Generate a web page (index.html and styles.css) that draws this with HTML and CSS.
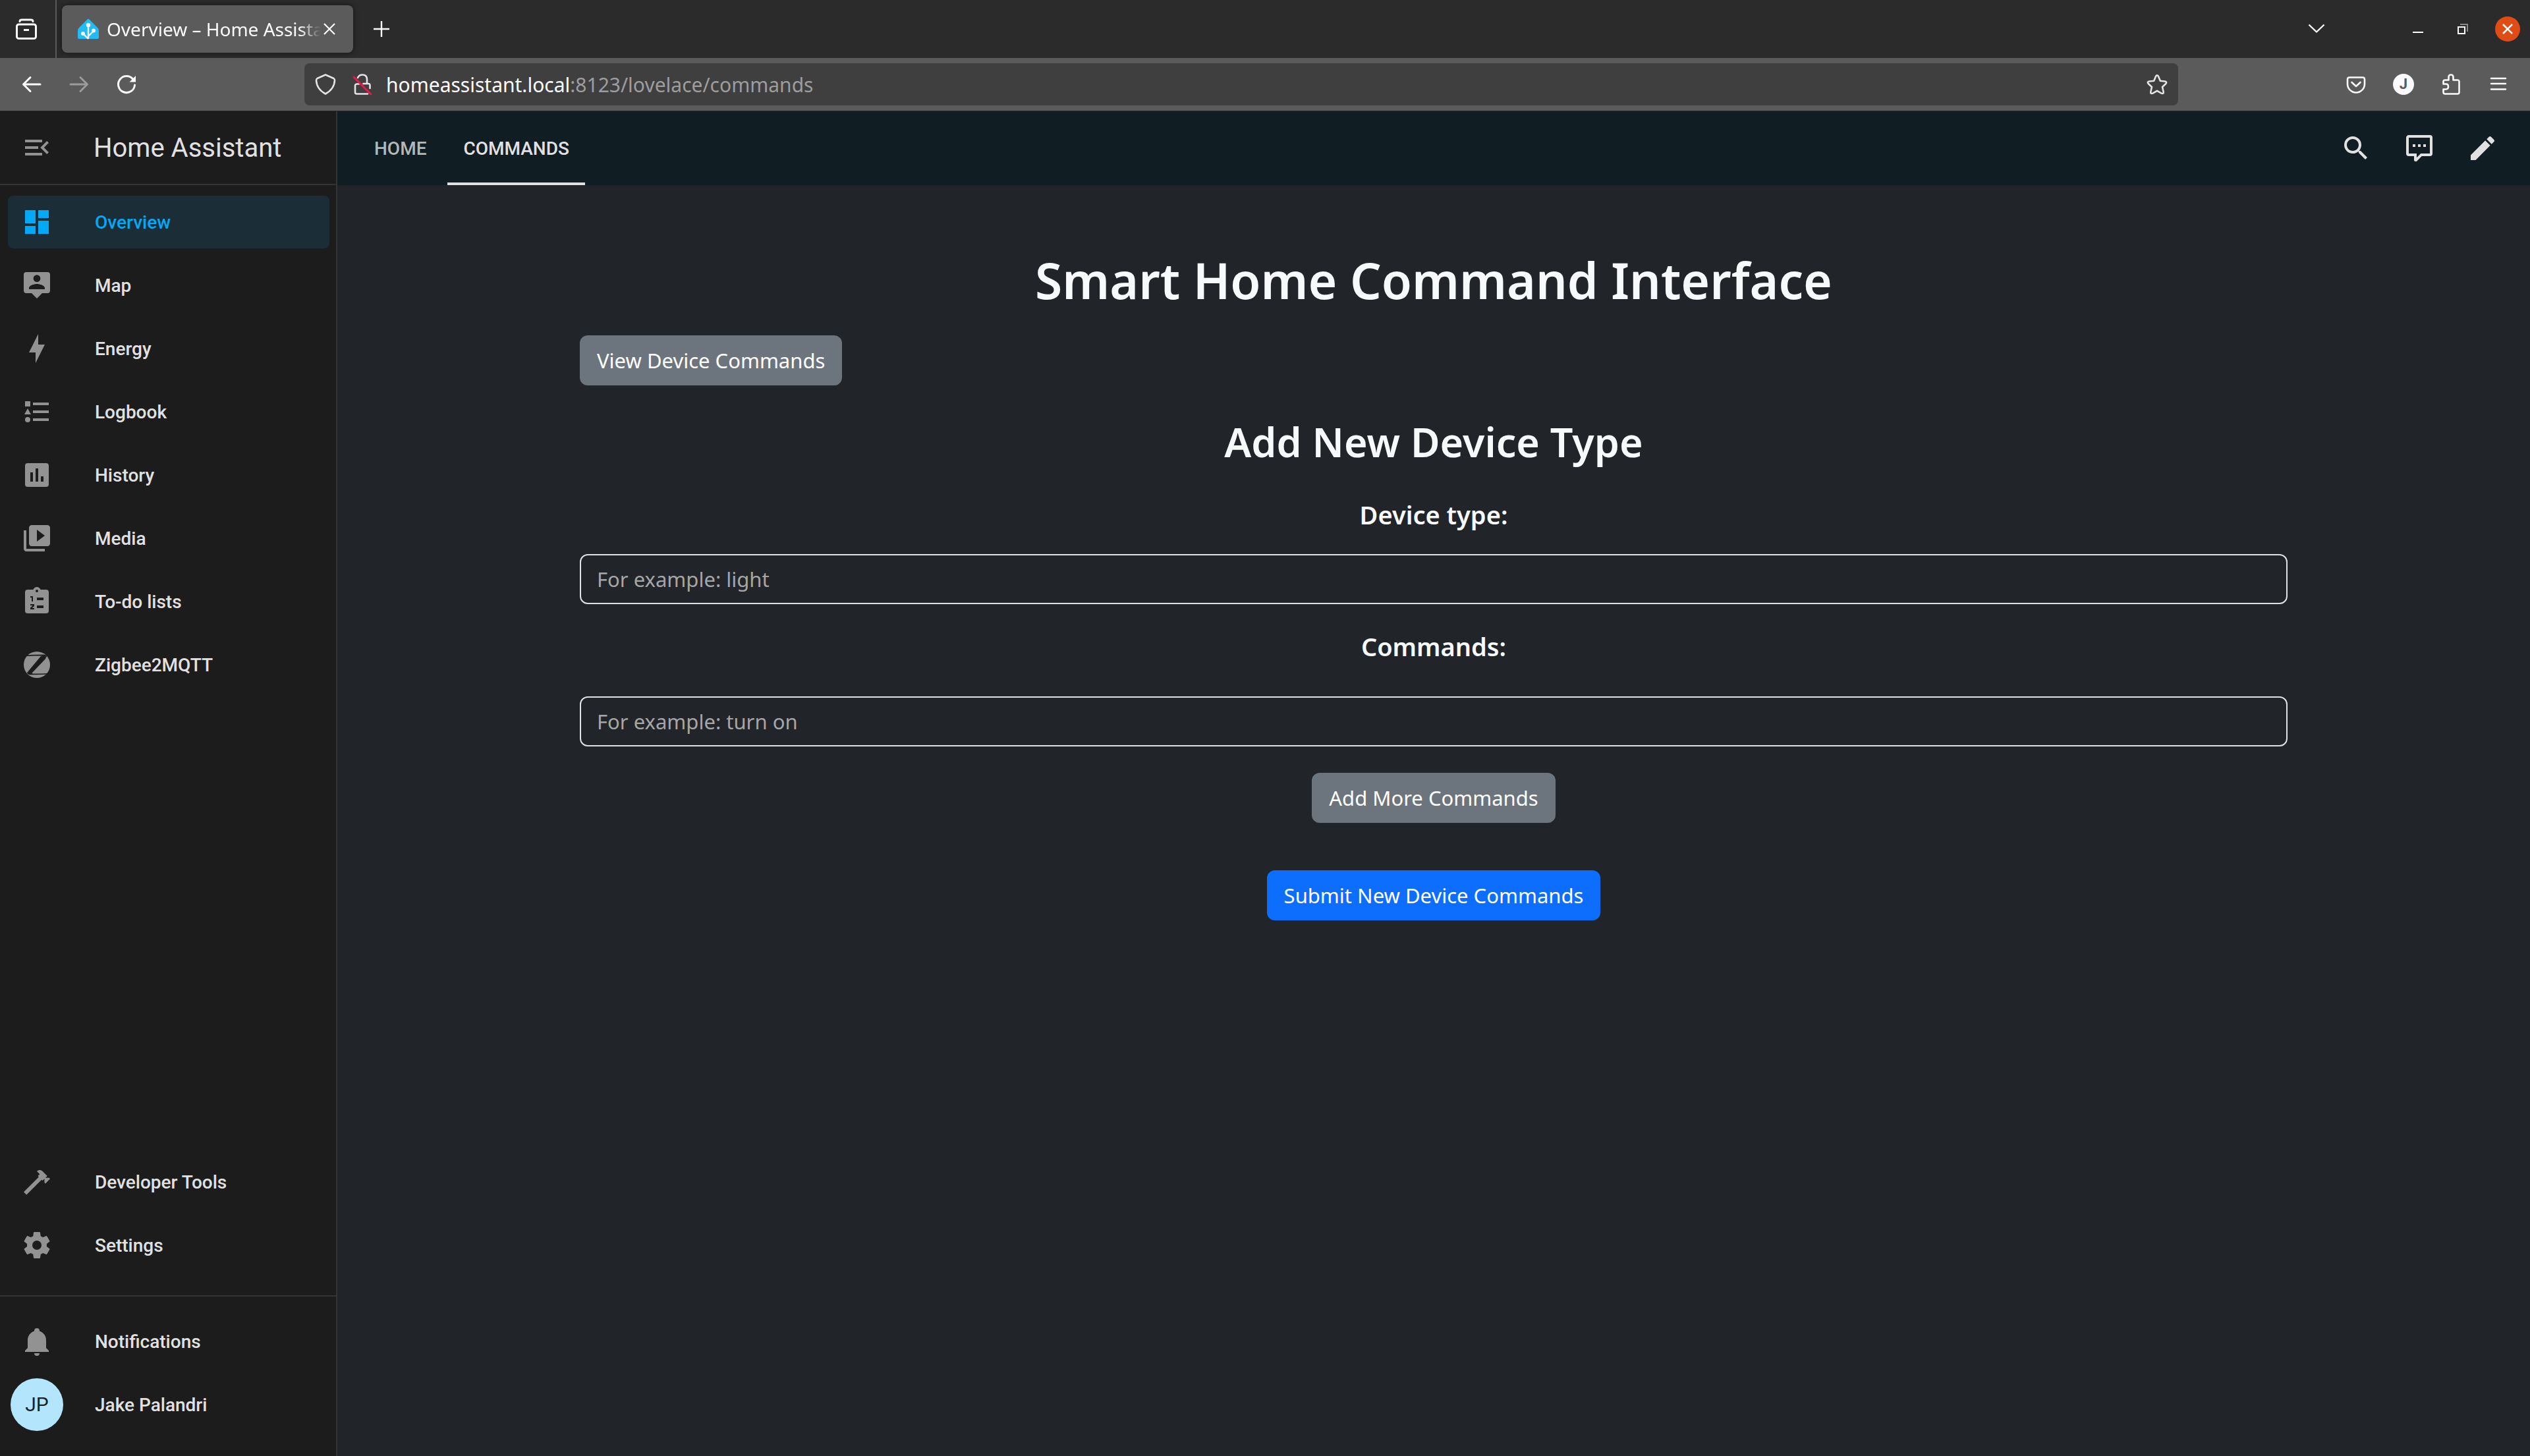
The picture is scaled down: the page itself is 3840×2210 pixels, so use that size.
FILE: index.html
```html
<!DOCTYPE html>
<html lang="en">
<head>
<meta charset="utf-8">
<title>Overview – Home Assistant</title>
<link rel="stylesheet" href="styles.css">
</head>
<body>
<header class="browser">
  <div class="tabstrip">
    <button class="view-btn" aria-label="Firefox View">
      <svg class="i32" viewBox="0 0 32 32" fill="none" stroke="#fbfbfe" stroke-width="3" stroke-linecap="round" stroke-linejoin="round"><path d="M6 4.500Q6 2 9 2H23Q26 2 26 4.500"/><rect x="1.500" y="9" width="29" height="21.500" rx="3"/><path d="M12 17.500H20" stroke-linecap="butt"/></svg>
    </button>
    <div class="tab">
      <svg class="i32" viewBox="0 0 32 32"><path fill="#22bbf4" d="M14.500 1.500Q16 0 17.500 1.500L30 14Q32 16 32 18.500V29Q32 31 30 31H2Q0 31 0 29V18.500Q0 16 2 14Z"/><g stroke="#f2f4f9" stroke-width="2.400" fill="none"><path d="M16 11V31M16 31L8 23M16 27L24 19"/></g><g fill="#f2f4f9"><circle cx="16" cy="10" r="3.200"/><circle cx="8" cy="23" r="3"/><circle cx="24" cy="18.500" r="3"/></g></svg>
      <span class="tab-title">Overview – Home Assistant</span>
      <button class="tab-close" aria-label="Close tab"><svg viewBox="0 0 18 18" width="18" height="18" stroke="#fbfbfe" stroke-width="2.200"><path d="M1 1L17 17M17 1L1 17"/></svg></button>
    </div>
    <button class="tool" aria-label="New tab"><svg class="i32" viewBox="0 0 32 32" stroke="#fbfbfe" stroke-width="2.400"><path d="M16 4V28M4 16H28"/></svg></button>
    <div class="window-side">
      <button class="tool" aria-label="List all tabs"><svg class="i32" viewBox="0 0 32 32" fill="none" stroke="#fbfbfe" stroke-width="2.400" stroke-linejoin="round"><path d="M4.500 9.500L16 20.500L27.500 9.500"/></svg></button>
      <div class="window-btns">
        <button class="wbtn" aria-label="Minimize"><svg viewBox="0 0 38 38"><path d="M11 24H27" stroke="#fff" stroke-width="2"/></svg></button>
        <button class="wbtn" aria-label="Restore"><svg viewBox="0 0 38 38" fill="none" stroke-width="2"><path d="M15 12H26V23" stroke="#8a8a8a"/><rect x="12" y="16" width="10" height="10" stroke="#fff"/></svg></button>
        <button class="wbtn wclose" aria-label="Close"><svg viewBox="0 0 38 38" stroke="#fff" stroke-width="2.600"><path d="M12 12L26 26M26 12L12 26"/></svg></button>
      </div>
    </div>
  </div>
  <div class="navbar">
    <div class="nav-group">
      <button class="tool" aria-label="Back"><svg class="i32" viewBox="0 0 32 32" fill="none" stroke="#fbfbfe" stroke-width="3" stroke-linecap="round" stroke-linejoin="round"><path d="M29 16H3.500M14 5.500L3.500 16L14 26.500"/></svg></button>
      <button class="tool" aria-label="Forward"><svg class="i32" viewBox="0 0 32 32" fill="none" stroke="#9b9b9b" stroke-width="3" stroke-linecap="round" stroke-linejoin="round"><path d="M3 16H28.500M18 5.500L28.500 16L18 26.500"/></svg></button>
      <button class="tool" aria-label="Reload"><svg class="i32" viewBox="0 0 32 32" fill="none" stroke="#fbfbfe" stroke-width="3" stroke-linecap="round"><path d="M26 8.500A12.500 12.500 0 1 0 28.500 17"/><path d="M30 3V12.500H20.500Z" fill="#fbfbfe" stroke="none"/></svg></button>
    </div>
    <div class="urlbar">
      <svg class="i32" viewBox="0 0 32 32" fill="none" stroke="#e4e4e6" stroke-width="2.600" stroke-linejoin="round"><path d="M16 1.500L28.500 7Q30 8 30 10Q29.500 23 16 30.500Q2.500 23 2 10Q2 8 3.500 7Z"/></svg>
      <svg class="i32" viewBox="0 0 32 32" fill="none" stroke="#e4e4e6" stroke-width="2.600" stroke-linecap="round"><path d="M9 6Q11 1.500 16 1.500Q23 1.500 23 8.500V15H25Q27.500 15 27.500 17.500V22M17.500 15H23M8 15.500Q5 15.500 5 18V28Q5 30.500 7.500 30.500H24M8 15.500H11"/><path d="M3 5L29 31" stroke="#e9184a" stroke-width="3"/></svg>
      <div class="url" role="textbox" aria-label="Address"><span class="url-host">homeassistant.local</span>:8123/lovelace/commands</div>
      <svg class="i32" viewBox="0 0 32 32" fill="none" stroke="#e4e4e6" stroke-width="2.600" stroke-linejoin="round"><path d="M14 4Q16 .500 18 4L20.800 10.800L28 11.500Q31.500 12.200 29.300 15L24 20L25.700 27.500Q26 31 22.600 29.600L16 25.800L9.400 29.600Q6 31 6.300 27.500L8 20L2.700 15Q.500 12.200 4 11.500L11.200 10.800Z"/></svg>
    </div>
    <div class="nav-group">
      <button class="tool" aria-label="Pocket"><svg class="i32" viewBox="0 0 32 32" fill="none" stroke="#fbfbfe" stroke-width="2.600" stroke-linecap="round" stroke-linejoin="round"><path d="M6 5.500H26Q29 5.500 29 8.500V15.500A13 13 0 0 1 3 15.500V8.500Q3 5.500 6 5.500Z"/><path d="M9.500 13L16 19L22.500 13"/></svg></button>
      <button class="tool" aria-label="Account"><span class="account">J</span></button>
      <button class="tool" aria-label="Extensions"><svg class="i32" viewBox="0 0 32 32" fill="none" stroke="#fbfbfe" stroke-width="2.600" stroke-linejoin="round"><path d="M12.500 9.500V5Q12.500 1.500 16 1.500Q19.500 1.500 19.500 5V9.500H26Q28.500 9.500 28.500 12V28Q28.500 30.500 26 30.500H7Q4.500 30.500 4.500 28V23.500H8.500Q12 23.500 12 19.500Q12 15.500 8.500 15.500H4.500V12Q4.500 9.500 7 9.500Z"/></svg></button>
      <button class="tool" aria-label="Application menu"><svg class="i32" viewBox="0 0 32 32" stroke="#fbfbfe" stroke-width="2.500" stroke-linecap="round"><path d="M5 7H27M5 15H27M5 23.500H27"/></svg></button>
    </div>
  </div>
</header>
<div class="app">
  <aside class="sidebar">
    <div class="side-head">
      <button class="menu-btn" aria-label="Collapse sidebar"><svg class="i48" viewBox="0 0 24 24"><path d="M21,15.610L19.590,17L14.580,12L19.590,7L21,8.390L17.440,12L21,15.610M3,6H16V8H3V6M3,13V11H13V13H3M3,18V16H16V18H3Z"/></svg></button>
      <span class="side-title">Home Assistant</span>
    </div>
    <nav class="side-list">
      <a class="item active" href="#overview"><svg class="i48" viewBox="0 0 24 24"><path d="M13,3V9H21V3M13,21H21V11H13M3,21H11V15H3M3,13H11V3H3V13Z"/></svg>Overview</a>
      <a class="item" href="#map"><svg class="i48" viewBox="0 0 24 24"><path fill-rule="evenodd" d="M20,2H4A2,2 0 0,0 2,4V16A2,2 0 0,0 4,18H8L12,22L16,18H20A2,2 0 0,0 22,16V4A2,2 0 0,0 20,2M12,4.100A2.700,2.700 0 0,1 12,9.500A2.700,2.700 0 0,1 12,4.100M18,15H6V14.100C6,12.100 10,11 12,11C14,11 18,12.100 18,14.100V15Z"/></svg>Map</a>
      <a class="item" href="#energy"><svg class="i48" viewBox="0 0 24 24"><path d="M11 15H6L13 1V9H18L11 23V15Z"/></svg>Energy</a>
      <a class="item" href="#logbook"><svg class="i48" viewBox="0 0 24 24"><path d="M5,9.500L7.500,14H2.500L5,9.500M3,4H7V8H3V4M5,20A2,2 0 0,0 7,18A2,2 0 0,0 5,16A2,2 0 0,0 3,18A2,2 0 0,0 5,20M9,5V7H21V5H9M9,19H21V17H9V19M9,13H21V11H9V13Z"/></svg>Logbook</a>
      <a class="item" href="#history"><svg class="i48" viewBox="0 0 24 24"><path fill-rule="evenodd" d="M9 17H7V10H9V17M13 17H11V7H13V17M17 17H15V13H17V17M19 3H5A2 2 0 0 0 3 5V19A2 2 0 0 0 5 21H19A2 2 0 0 0 21 19V5A2 2 0 0 0 19 3Z"/></svg>History</a>
      <a class="item" href="#media"><svg class="i48" viewBox="0 0 24 24"><path fill-rule="evenodd" d="M4 6H2V20C2 21.110 2.900 22 4 22H18V20H4V6M20 2H8C6.900 2 6 2.900 6 4V16C6 17.110 6.900 18 8 18H20C21.110 18 22 17.110 22 16V4C22 2.890 21.100 2 20 2M12 14.500V5.500L18 10L12 14.500Z"/></svg>Media</a>
      <a class="item" href="#todo"><svg class="i48" viewBox="0 0 24 24"><path fill-rule="evenodd" d="M19,3H14.820C14.400,1.840 13.300,1 12,1C10.700,1 9.600,1.840 9.180,3H5A2,2 0 0,0 3,5V19A2,2 0 0,0 5,21H19A2,2 0 0,0 21,19V5A2,2 0 0,0 19,3M12,3A1,1 0 0,1 12,5A1,1 0 0,1 12,3M7,8H9V12H8V9H7V8M7,14H10V15.500L8.300,17H10V18H7V16.800L8.900,15H7V14M12,9H17V11H12V9M12,15H17V17H12V15Z"/></svg>To-do lists</a>
      <a class="item" href="#zigbee2mqtt"><svg class="i48" viewBox="0 0 24 24"><circle cx="12" cy="12" r="10"/><path fill="none" stroke="#1c1c1c" stroke-width=".800" d="M4 5.100Q9 4.700 17 4.700Q19.500 4.800 19 6M20 18.900Q15 19.200 7 19.200Q4.500 19 5.200 17.500"/><path fill="#1c1c1c" d="M15 5.500Q18.500 4.400 19 6Q19 7 18.300 7.700L9 17.500Q7.500 18.800 9 18.500L8 19.300Q4.800 19 5.300 17.300Q5.500 16.600 6.300 15.900Z"/></svg>Zigbee2MQTT</a>
    </nav>
    <nav class="side-list side-bottom">
      <a class="item" href="#developer-tools"><svg class="i48" viewBox="0 0 24 24"><path d="M2 19.630L13.430 8.200L12.720 7.500L14.140 6.070L12 3.890C13.200 2.700 15.090 2.700 16.270 3.890L19.870 7.500L18.450 8.910H21.290L22 9.620L18.450 13.210L17.740 12.500V9.620L16.270 11.040L15.560 10.330L4.130 21.760L2 19.630Z"/></svg>Developer Tools</a>
      <a class="item" href="#settings"><svg class="i48" viewBox="0 0 24 24"><path d="M12,15.500A3.500,3.500 0 0,1 8.500,12A3.500,3.500 0 0,1 12,8.500A3.500,3.500 0 0,1 15.500,12A3.500,3.500 0 0,1 12,15.500M19.430,12.970C19.470,12.650 19.500,12.330 19.500,12C19.500,11.670 19.470,11.340 19.430,11L21.540,9.370C21.730,9.220 21.780,8.950 21.660,8.730L19.660,5.270C19.540,5.050 19.270,4.960 19.050,5.050L16.560,6.050C16.040,5.660 15.500,5.320 14.870,5.070L14.500,2.420C14.460,2.180 14.250,2 14,2H10C9.750,2 9.540,2.180 9.500,2.420L9.130,5.070C8.500,5.320 7.960,5.660 7.440,6.050L4.950,5.050C4.730,4.960 4.460,5.050 4.340,5.270L2.340,8.730C2.210,8.950 2.270,9.220 2.460,9.370L4.570,11C4.530,11.340 4.500,11.670 4.500,12C4.500,12.330 4.530,12.650 4.570,12.970L2.460,14.630C2.270,14.780 2.210,15.050 2.340,15.270L4.340,18.730C4.460,18.950 4.730,19.030 4.950,18.950L7.440,17.940C7.960,18.340 8.500,18.680 9.130,18.930L9.500,21.580C9.540,21.820 9.750,22 10,22H14C14.250,22 14.460,21.820 14.500,21.580L14.870,18.930C15.500,18.670 16.040,18.340 16.560,17.940L19.050,18.950C19.270,19.030 19.540,18.950 19.660,18.730L21.660,15.270C21.780,15.050 21.730,14.780 21.540,14.630L19.430,12.970Z"/></svg>Settings</a>
    </nav>
    <nav class="side-list side-user">
      <a class="item" href="#notifications"><svg class="i48" viewBox="0 0 24 24"><path d="M21,19V20H3V19L5,17V11C5,7.900 7.030,5.170 10,4.290C10,4.190 10,4.100 10,4A2,2 0 0,1 12,2A2,2 0 0,1 14,4C14,4.100 14,4.190 14,4.290C16.970,5.170 19,7.900 19,11V17L21,19M14,21A2,2 0 0,1 12,23A2,2 0 0,1 10,21H14Z"/></svg>Notifications</a>
      <a class="item profile" href="#profile"><span class="avatar">JP</span>Jake Palandri</a>
    </nav>
  </aside>
  <div class="content">
    <div class="toolbar">
      <nav class="views">
        <a class="view" href="#home">HOME</a>
        <a class="view current" href="#commands">COMMANDS</a>
      </nav>
      <div class="actions">
        <button class="action" aria-label="Search"><svg class="i48" viewBox="0 0 24 24"><path d="M9.500,3A6.500,6.500 0 0,1 16,9.500C16,11.110 15.410,12.590 14.440,13.730L14.710,14H15.500L20.500,19L19,20.500L14,15.500V14.710L13.730,14.440C12.590,15.410 11.110,16 9.500,16A6.500,6.500 0 0,1 3,9.500A6.500,6.500 0 0,1 9.500,3M9.500,5C7,5 5,7 5,9.500C5,12 7,14 9.500,14C12,14 14,12 14,9.500C14,7 12,5 9.500,5Z"/></svg></button>
        <button class="action" aria-label="Assist"><svg class="i48" viewBox="0 0 24 24"><path d="M9,22A1,1 0 0,1 8,21V18H4A2,2 0 0,1 2,16V4C2,2.890 2.900,2 4,2H20A2,2 0 0,1 22,4V16A2,2 0 0,1 20,18H13.900L10.200,21.710C10,21.900 9.750,22 9.500,22V22H9M10,16V19.080L13.080,16H20V4H4V16H10M17,11H15V9H17V11M13,11H11V9H13V11M9,11H7V9H9V11Z"/></svg></button>
        <button class="action" aria-label="Edit dashboard"><svg class="i48" viewBox="0 0 24 24"><path d="M20.710,7.040C21.100,6.650 21.100,6 20.710,5.630L18.370,3.290C18,2.900 17.350,2.900 16.960,3.290L15.120,5.120L18.870,8.870M3,17.250V21H6.750L17.810,9.930L14.060,6.180L3,17.250Z"/></svg></button>
      </div>
    </div>
    <main class="container">
      <h1>Smart Home Command Interface</h1>
      <button class="btn start">View Device Commands</button>
      <h2>Add New Device Type</h2>
      <form class="form">
        <label for="device-type">Device type:</label>
        <input class="field" id="device-type" type="text" placeholder="For example: light">
        <label class="commands-label" for="command">Commands:</label>
        <input class="field" id="command" type="text" placeholder="For example: turn on">
        <button class="btn add" type="button">Add More Commands</button>
        <button class="btn primary" type="submit">Submit New Device Commands</button>
      </form>
    </main>
  </div>
</div>
</body>
</html>
```
FILE: styles.css
```css
* { box-sizing: border-box; }
html { color-scheme: dark; }
body {
  margin: 0;
  min-height: 100vh;
  display: flex;
  flex-direction: column;
  background: #212529;
  color: #e1e1e1;
  font-family: "Noto Sans", sans-serif;
  font-size: 31px;
}
button {
  font: inherit;
  color: inherit;
  background: none;
  border: 0;
  padding: 0;
  cursor: pointer;
}
a { color: inherit; text-decoration: none; }
svg { display: block; flex: none; }
.i32 { width: 32px; height: 32px; }
.i48 { width: 48px; height: 48px; fill: currentColor; }

/* Browser chrome */
.browser { border-bottom: 1px solid #262626; }
.tabstrip {
  display: flex;
  align-items: center;
  height: 88px;
  background: #2b2b2b;
}
.view-btn {
  display: flex;
  align-items: center;
  align-self: stretch;
  padding: 0 28px 0 24px;
  border-right: 2px solid #5b5b5b;
}
.tab {
  display: flex;
  align-items: center;
  width: 442px;
  height: 72px;
  margin: 0 11px 0 8px;
  padding: 0 23px 0 24px;
  border-radius: 8px;
  background: #5b5b5b;
  box-shadow: 0 0 8px #00000080;
}
.tab-title {
  flex: 1;
  margin-left: 12px;
  overflow: hidden;
  white-space: nowrap;
  color: #fbfbfe;
  font-size: 28px;
  mask-image: linear-gradient(to left, transparent, #000 32px);
}
.tab-close { padding: 4px; }
.tool {
  display: flex;
  align-items: center;
  justify-content: center;
  width: 64px;
  height: 64px;
}
.window-side {
  display: flex;
  align-items: center;
  gap: 103px;
  margin-left: auto;
  padding-right: 15px;
}
.window-btns { display: flex; gap: 30px; }
.wbtn { width: 38px; height: 38px; border-radius: 50%; }
.wclose { background: #e04c16; }
.navbar {
  display: flex;
  align-items: center;
  height: 80px;
  padding: 0 16px;
  background: #5b5b5b;
}
.nav-group { display: flex; gap: 8px; }
.urlbar {
  flex: 1;
  display: flex;
  align-items: center;
  gap: 24px;
  height: 64px;
  margin: 0 238px;
  padding: 0 16px;
  border-radius: 8px;
  background: #3f3f3f;
}
.url { flex: 1; margin-left: -4px; color: #9d9d9f; font-size: 30px; }
.url-host { color: #fbfbfe; }
.account {
  width: 32px;
  height: 32px;
  border-radius: 50%;
  background: #fbfbfe;
  color: #5b5b5b;
  font: 700 22px/32px Roboto, sans-serif;
}

/* Sidebar */
.app { flex: 1; display: flex; font-family: Roboto, sans-serif; }
.sidebar {
  display: flex;
  flex-direction: column;
  flex: none;
  width: 512px;
  padding-bottom: 38px;
  border-right: 2px solid #343434;
  background: #1c1c1c;
  font-size: 28px;
  font-weight: 500;
}
.side-head {
  display: flex;
  align-items: center;
  gap: 62px;
  height: 112px;
  padding-left: 32px;
  border-bottom: 2px solid #343434;
}
.menu-btn { color: #929292; }
.side-title { font-size: 40px; font-weight: 400; }
.side-list {
  display: flex;
  flex-direction: column;
  gap: 16px;
  padding: 16px 10px 0 12px;
}
.side-bottom { margin-top: auto; padding-bottom: 36px; }
.side-user { padding-top: 28px; border-top: 2px solid #343434; }
.item {
  display: flex;
  align-items: center;
  gap: 64px;
  height: 80px;
  padding-left: 20px;
  border-radius: 8px;
}
.item svg { color: #929292; }
.active { background: #1b2d36; color: #03a9f4; }
.active svg { color: #03a9f4; }
.profile { gap: 48px; padding-left: 4px; }
.avatar {
  width: 80px;
  height: 80px;
  border-radius: 50%;
  background: #b3e5fc;
  color: #212121;
  font-size: 30px;
  font-weight: 400;
  line-height: 80px;
  text-align: center;
}

/* Dashboard */
.content { flex: 1; min-width: 0; }
.toolbar {
  display: flex;
  justify-content: space-between;
  height: 112px;
  padding: 0 24px 0 32px;
  background: #101e24;
}
.views { display: flex; gap: 8px; }
.view {
  display: flex;
  align-items: center;
  padding: 4px 24px 0;
  border-bottom: 4px solid transparent;
  color: #b3b7b9;
  font-size: 28px;
  font-weight: 500;
}
.current { border-color: #e1e1e1; color: #e1e1e1; }
.actions { display: flex; align-items: center; }
.action { display: flex; justify-content: center; width: 96px; }
.container {
  display: flex;
  flex-direction: column;
  max-width: 2640px;
  margin: 0 auto;
  padding: 96px 24px;
  font-family: "Noto Sans", sans-serif;
  color: #f8f9fa;
}
h1, h2 { margin: 0; font-weight: 600; text-align: center; }
h1 { margin-bottom: 36px; font-size: 75px; line-height: 96px; }
h2 { margin: 48px 0; font-size: 61px; line-height: 76px; }
.btn {
  height: 76px;
  padding: 0 26px;
  border-radius: 12px;
  background: #6c757d;
  color: #fff;
}
.start { align-self: flex-start; }
.form { display: flex; flex-direction: column; align-items: center; }
label { font-size: 38px; font-weight: 600; line-height: 48px; }
.field {
  width: 100%;
  height: 76px;
  margin-top: 36px;
  padding: 0 24px;
  border: 2px solid #dee2e6;
  border-radius: 12px;
  background: #212529;
  color: #f8f9fa;
  font: inherit;
}
.field::placeholder { color: #a6a6a6; opacity: 1; }
.commands-label { margin: 40px 0 16px; }
.add { margin: 40px 0 72px; }
.primary { background: #0d6efd; }
```
